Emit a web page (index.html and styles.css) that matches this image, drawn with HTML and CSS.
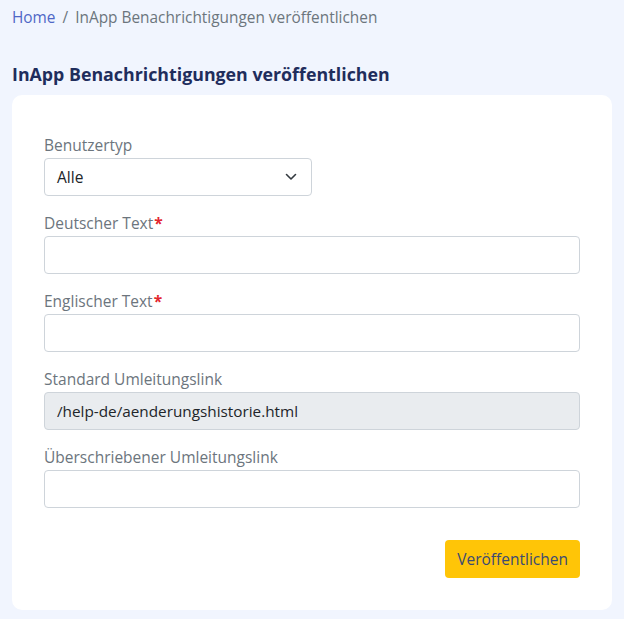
FILE: index.html
```html
<!DOCTYPE html>
<html lang="de">
<head>
<meta charset="utf-8">
<title>InApp Benachrichtigungen veröffentlichen</title>
<link rel="stylesheet" href="styles.css">
</head>
<body>
<div class="page">
  <nav class="breadcrumb">
    <a href="#" class="crumb-link">Home</a>
    <span class="sep">/</span>
    <span class="crumb-current">InApp Benachrichtigungen veröffentlichen</span>
  </nav>
  <h1 class="title">InApp Benachrichtigungen veröffentlichen</h1>
  <div class="card">
    <form class="form">
      <div class="field">
        <label class="label">Benutzertyp</label>
        <div class="select">
          <span>Alle</span>
          <svg class="chev" width="12" height="8" viewBox="0 0 12 8"><path d="M1.5 1.5 L6 6 L10.5 1.5" fill="none" stroke="#343a40" stroke-width="1.6" stroke-linecap="round" stroke-linejoin="round"/></svg>
        </div>
      </div>
      <div class="field">
        <label class="label">Deutscher Text<span class="req">*</span></label>
        <div class="input"></div>
      </div>
      <div class="field">
        <label class="label">Englischer Text<span class="req">*</span></label>
        <div class="input"></div>
      </div>
      <div class="field">
        <label class="label">Standard Umleitungslink</label>
        <div class="input disabled">/help-de/aenderungshistorie.html</div>
      </div>
      <div class="field">
        <label class="label">Überschriebener Umleitungslink</label>
        <div class="input"></div>
      </div>
      <div class="actions">
        <button type="button" class="btn">Veröffentlichen</button>
      </div>
    </form>
  </div>
</div>
</body>
</html>
```

FILE: styles.css
```css
* { box-sizing: border-box; }
html, body { margin: 0; padding: 0; }
body {
  background: #f1f5fe;
  font-family: "Open Sans", Lato, sans-serif;
  color: #212529;
}
.page { padding: 0 12px 10px 12px; }
.breadcrumb {
  height: 35px;
  display: flex;
  align-items: center;
  gap: 7px;
  font-size: 15.4px;
  color: #6c757d;
}
.crumb-link { color: #4f67c6; text-decoration: none; }
.title {
  margin: 27px 0 9px 0;
  font-size: 17.8px;
  line-height: 24px;
  font-weight: 700;
  color: #1f2d5c;
}
.card {
  background: #fff;
  border-radius: 10px;
  padding: 41px 32px 32px 32px;
}
.form { display: flex; flex-direction: column; }
.field { display: flex; flex-direction: column; margin-bottom: 18px; }
.label {
  font-size: 15.5px;
  line-height: 19px;
  padding-bottom: 3px;
  color: #6c757d;
}
.req { color: #e3262e; font-weight: 700; margin-left: 1px; }
.select, .input {
  height: 38px;
  border: 1px solid #ced4da;
  border-radius: 4px;
  font-size: 15.5px;
  display: flex;
  align-items: center;
  padding: 0 12px;
  color: #212529;
  background: #fff;
}
.select { width: 268px; justify-content: space-between; padding-right: 14px; }
.input.disabled { background: #e9ecef; font-size: 15.3px; }
.actions { display: flex; justify-content: flex-end; margin-top: 14px; }
.btn {
  height: 38px;
  padding: 0 12px;
  border: none;
  border-radius: 4px;
  background: #ffc507;
  color: #3b4a74;
  font-family: inherit;
  font-size: 15.5px;
}
```
